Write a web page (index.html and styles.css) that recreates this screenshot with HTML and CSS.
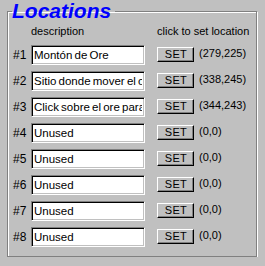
FILE: index.html
```html
<!DOCTYPE html>
<html lang="es">
<head>
    <meta charset="UTF-8">
    <title>Locations</title>
    <link rel="stylesheet" href="styles.css">
</head>
<body>
    <fieldset class="locations">
        <legend class="locations-title">Locations</legend>

        <div class="loc-header">
            <span class="col-desc">description</span>
            <span class="col-set">click to set location</span>
        </div>

        <div class="loc-list">
            <div class="loc-row">
                <label class="loc-num" for="loc1">#1</label>
                <input class="loc-desc" id="loc1" type="text" value="Montón de Ore">
                <button class="set-btn" type="button">SET</button>
                <span class="loc-coords">(279,225)</span>
            </div>
            <div class="loc-row">
                <label class="loc-num" for="loc2">#2</label>
                <input class="loc-desc" id="loc2" type="text" value="Sitio donde mover el ore">
                <button class="set-btn" type="button">SET</button>
                <span class="loc-coords">(338,245)</span>
            </div>
            <div class="loc-row">
                <label class="loc-num" for="loc3">#3</label>
                <input class="loc-desc" id="loc3" type="text" value="Click sobre el ore para">
                <button class="set-btn" type="button">SET</button>
                <span class="loc-coords">(344,243)</span>
            </div>
            <div class="loc-row">
                <label class="loc-num" for="loc4">#4</label>
                <input class="loc-desc" id="loc4" type="text" value="Unused">
                <button class="set-btn" type="button">SET</button>
                <span class="loc-coords">(0,0)</span>
            </div>
            <div class="loc-row">
                <label class="loc-num" for="loc5">#5</label>
                <input class="loc-desc" id="loc5" type="text" value="Unused">
                <button class="set-btn" type="button">SET</button>
                <span class="loc-coords">(0,0)</span>
            </div>
            <div class="loc-row">
                <label class="loc-num" for="loc6">#6</label>
                <input class="loc-desc" id="loc6" type="text" value="Unused">
                <button class="set-btn" type="button">SET</button>
                <span class="loc-coords">(0,0)</span>
            </div>
            <div class="loc-row">
                <label class="loc-num" for="loc7">#7</label>
                <input class="loc-desc" id="loc7" type="text" value="Unused">
                <button class="set-btn" type="button">SET</button>
                <span class="loc-coords">(0,0)</span>
            </div>
            <div class="loc-row">
                <label class="loc-num" for="loc8">#8</label>
                <input class="loc-desc" id="loc8" type="text" value="Unused">
                <button class="set-btn" type="button">SET</button>
                <span class="loc-coords">(0,0)</span>
            </div>
        </div>
    </fieldset>
</body>
</html>
```

FILE: styles.css
```css
body {
    margin: 0;
    background-color: #c0c0c0;
    font-family: "Liberation Sans", Arial, sans-serif;
    font-size: 11px;
    color: #000;
}

.locations {
    box-sizing: border-box;
    width: 250px;
    height: 257px;
    min-width: 0;
    margin: 0 0 0 7px;
    padding: 3px 5px 0 5px;
    border: 1px solid #808080;
    box-shadow: 1px 1px 0 #fff, inset 1px 1px 0 #fff;
}

.locations-title {
    margin-left: -1px;
    padding: 0 4px 0 0;
    font: italic bold 21px/22px "Liberation Sans", Arial, sans-serif;
    color: #0000ff;
}

.loc-header {
    display: flex;
    padding-left: 18px;
    line-height: 13px;
}

.col-desc {
    width: 126px;
}

.loc-list {
    display: flex;
    flex-direction: column;
    gap: 6px;
    margin-top: 7px;
}

.loc-row {
    display: flex;
    align-items: flex-start;
    height: 20px;
}

.loc-num {
    width: 18px;
    margin-top: 3px;
    font-size: 12px;
    line-height: 14px;
}

.loc-desc {
    box-sizing: border-box;
    width: 114px;
    height: 20px;
    margin: 0;
    padding: 0 2px;
    border: 1px solid;
    border-color: #808080 #fff #fff #808080;
    box-shadow: inset 1px 1px 0 #000, inset -1px -1px 0 #c0c0c0;
    background-color: #fff;
    font-family: "Liberation Sans", Arial, sans-serif;
    font-size: 11.5px;
    word-spacing: -1px;
    color: #000;
    outline: none;
}

.set-btn {
    box-sizing: border-box;
    width: 37px;
    height: 15px;
    margin: 2px 0 0 12px;
    padding: 0 0 1px 1px;
    border: 1px solid;
    border-color: #fff #000 #000 #fff;
    box-shadow: inset -1px -1px 0 #808080;
    background-color: #c0c0c0;
    font-family: "Liberation Sans", Arial, sans-serif;
    font-size: 11px;
    letter-spacing: 0.3px;
    color: #000;
    cursor: pointer;
}

.loc-coords {
    margin: 2px 0 0 5px;
    line-height: 13px;
}
```
